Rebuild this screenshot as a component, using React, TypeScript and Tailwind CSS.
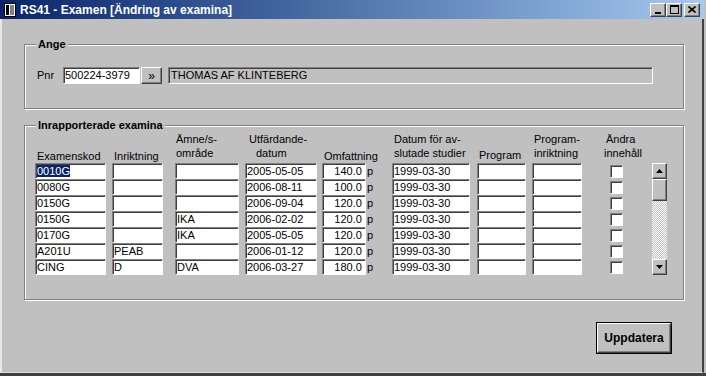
const sunken =
  "border border-t-[#808080] border-l-[#808080] border-b-white border-r-white shadow-[inset_1px_1px_0_#404040]";
const raised =
  "border border-t-white border-l-white border-b-[#404040] border-r-[#404040] shadow-[inset_-1px_-1px_0_#808080]";

type Row = { kod: string; inr: string; amne: string; utf: string; omf: string; avsl: string };

const ROWS: Row[] = [
  { kod: "0010G", inr: "", amne: "", utf: "2005-05-05", omf: "140.0", avsl: "1999-03-30" },
  { kod: "0080G", inr: "", amne: "", utf: "2006-08-11", omf: "100.0", avsl: "1999-03-30" },
  { kod: "0150G", inr: "", amne: "", utf: "2006-09-04", omf: "120.0", avsl: "1999-03-30" },
  { kod: "0150G", inr: "", amne: "IKA", utf: "2006-02-02", omf: "120.0", avsl: "1999-03-30" },
  { kod: "0170G", inr: "", amne: "IKA", utf: "2005-05-05", omf: "120.0", avsl: "1999-03-30" },
  { kod: "A201U", inr: "PEAB", amne: "", utf: "2006-01-12", omf: "120.0", avsl: "1999-03-30" },
  { kod: "CING", inr: "D", amne: "DVA", utf: "2006-03-27", omf: "180.0", avsl: "1999-03-30" },
];

function Cell({ className = "", children }: { className?: string; children?: React.ReactNode }) {
  return (
    <div className={`h-[16px] overflow-hidden bg-white pl-[1px] leading-[14px] whitespace-nowrap ${sunken} ${className}`}>
      {children}
    </div>
  );
}

function Column({
  className,
  head,
  children,
}: {
  className: string;
  head: React.ReactNode;
  children: React.ReactNode;
}) {
  return (
    <div className={`flex shrink-0 flex-col ${className}`}>
      <div className="flex h-[31px] flex-col justify-end leading-[14px] whitespace-nowrap">{head}</div>
      {children}
    </div>
  );
}

function GroupBox({
  label,
  className,
  children,
}: {
  label: string;
  className: string;
  children: React.ReactNode;
}) {
  return (
    <div
      className={`relative shrink-0 border border-[#808080] shadow-[inset_1px_1px_0_#fff,1px_1px_0_#fff] ${className}`}
    >
      <span className="absolute top-[-8px] left-[11px] bg-[#c0c0c0] px-[2px] leading-[14px] font-bold">
        {label}
      </span>
      {children}
    </div>
  );
}

function TitleIcon() {
  return (
    <svg width="12" height="14" viewBox="0 0 12 14" className="shrink-0">
      <rect x="0.5" y="0.5" width="11" height="13" fill="#fff" stroke="#000" />
      <rect x="2" y="2" width="3" height="10" fill="#000" />
      <path d="M6 3h4M6 5h4M6 7h4M6 9h4M6 11h4" stroke="#000" strokeWidth="1" />
    </svg>
  );
}

function CaptionButton({ children, className = "" }: { children: React.ReactNode; className?: string }) {
  return (
    <div
      className={`flex h-[14px] w-[16px] items-center justify-center bg-[#c0c0c0] ${raised} ${className}`}
    >
      {children}
    </div>
  );
}

function ScrollBtn({ up }: { up?: boolean }) {
  return (
    <div className={`flex h-[16px] w-[15px] items-center justify-center bg-[#c0c0c0] ${raised}`}>
      <svg width="7" height="4" viewBox="0 0 7 4">
        {up ? <path d="M3.5 0L7 4H0z" fill="#000" /> : <path d="M0 0h7L3.5 4z" fill="#000" />}
      </svg>
    </div>
  );
}

export default function App() {
  return (
    <div className="flex h-[376px] w-[706px] flex-col overflow-hidden border-b-[3px] border-b-[#404040] bg-[#c0c0c0] font-['Liberation_Sans',Arial,sans-serif] text-[11px] text-black">
      {/* title bar */}
      <div className="flex h-[19px] w-[704px] shrink-0 items-center bg-linear-to-r from-[#0a246a] to-[#a6caf0] pl-[4px]">
        <TitleIcon />
        <span className="ml-[4px] text-[12px] font-bold text-white">RS41 - Examen [Ändring av examina]</span>
        <div className="ml-auto flex items-center pr-[4px]">
          <CaptionButton>
            <span className="mt-[6px] block h-[2px] w-[6px] bg-black" />
          </CaptionButton>
          <CaptionButton>
            <span className="block h-[9px] w-[9px] border border-t-2 border-black" />
          </CaptionButton>
          <CaptionButton className="ml-[2px]">
            <svg width="8" height="7" viewBox="0 0 8 7">
              <path d="M0.5 0.5L7.5 6.5M7.5 0.5L0.5 6.5" stroke="#000" strokeWidth="1.6" />
            </svg>
          </CaptionButton>
        </div>
      </div>

      {/* body */}
      <div className="flex w-[704px] grow flex-col border-r-2 border-b border-l-2 border-r-[#404040] border-b-[#e0e0e0] border-l-[#e8e8e8]">
        <GroupBox label="Ange" className="mt-[25px] ml-[22px] h-[65px] w-[660px]">
          <div className="flex items-center pt-[22px] pl-[12px]">
            <span className="w-[26px]">Pnr</span>
            <div className={`h-[17px] w-[77px] bg-white pl-[1px] leading-[15px] ${sunken}`}>500224-3979</div>
            <div
              className={`ml-[1px] flex h-[17px] w-[21px] items-center justify-center bg-[#c0c0c0] text-[12px] leading-[12px] ${raised}`}
            >
              »
            </div>
            <div className={`ml-[6px] h-[17px] w-[485px] bg-[#c0c0c0] pl-[2px] leading-[15px] ${sunken}`}>
              THOMAS AF KLINTEBERG
            </div>
          </div>
        </GroupBox>

        <GroupBox label="Inrapporterade examina" className="mt-[16px] ml-[22px] h-[175px] w-[660px]">
          <div className="flex pt-[6px] pl-[10px]">
            <Column className="w-[71px]" head={<span className="pl-[2px]">Examenskod</span>}>
              {ROWS.map((r, i) => (
                <Cell key={i}>
                  {i === 0 ? <span className="bg-[#0a246a] text-white">{r.kod}</span> : r.kod}
                </Cell>
              ))}
            </Column>
            <Column className="ml-[6px] w-[51px]" head={<span className="pl-[2px]">Inriktning</span>}>
              {ROWS.map((r, i) => (
                <Cell key={i}>{r.inr}</Cell>
              ))}
            </Column>
            <Column
              className="ml-[12px] w-[64px]"
              head={
                <div className="pb-[3px] pl-[1px]">
                  <div>Ämne/s-</div>
                  <div>område</div>
                </div>
              }
            >
              {ROWS.map((r, i) => (
                <Cell key={i}>{r.amne}</Cell>
              ))}
            </Column>
            <Column
              className="ml-[6px] w-[72px]"
              head={
                <div className="pb-[3px]">
                  <div className="pl-[4px]">Utfärdande-</div>
                  <div className="pl-[11px]">datum</div>
                </div>
              }
            >
              {ROWS.map((r, i) => (
                <Cell key={i}>{r.utf}</Cell>
              ))}
            </Column>
            <Column className="ml-[5px] w-[51px]" head={<span className="pl-[2px]">Omfattning</span>}>
              {ROWS.map((r, i) => (
                <div key={i} className="flex items-center">
                  <Cell className="w-[44px] pr-[3px] text-right">{r.omf}</Cell>
                  <span className="ml-[1px] leading-[14px]">p</span>
                </div>
              ))}
            </Column>
            <Column
              className="ml-[19px] w-[78px]"
              head={
                <div className="pb-[3px] pl-[2px]">
                  <div>Datum för av-</div>
                  <div>slutade studier</div>
                </div>
              }
            >
              {ROWS.map((r, i) => (
                <Cell key={i}>{r.avsl}</Cell>
              ))}
            </Column>
            <Column className="ml-[7px] w-[49px]" head={<span className="pb-[1px] pl-[2px]">Program</span>}>
              {ROWS.map((_, i) => (
                <Cell key={i} />
              ))}
            </Column>
            <Column
              className="ml-[6px] w-[50px]"
              head={
                <div className="pb-[3px] pl-[2px]">
                  <div>Program-</div>
                  <div>inriktning</div>
                </div>
              }
            >
              {ROWS.map((_, i) => (
                <Cell key={i} />
              ))}
            </Column>
            <Column
              className="ml-[22px] w-[40px]"
              head={
                <div className="pb-[3px]">
                  <div className="pl-[2px]">Ändra</div>
                  <div>innehåll</div>
                </div>
              }
            >
              {ROWS.map((_, i) => (
                <div key={i} className="flex h-[16px] items-center pl-[6px]">
                  <span className={`block h-[13px] w-[13px] bg-white ${sunken}`} />
                </div>
              ))}
            </Column>
            <div className="ml-[8px] flex w-[15px] shrink-0 flex-col pt-[31px]">
              <ScrollBtn up />
              <div className={`h-[22px] w-[15px] bg-[#c0c0c0] ${raised}`} />
              <div className="h-[58px] w-[15px] bg-[repeating-conic-gradient(#ffffff_0_25%,#c0c0c0_0_50%)] bg-[length:2px_2px]" />
              <ScrollBtn />
            </div>
          </div>
        </GroupBox>

        <div className="mt-[22px] ml-[594px] w-[76px] shrink-0 border border-black">
          <div className={`flex h-[30px] items-center justify-center bg-[#c0c0c0] text-[12px] font-bold ${raised}`}>
            Uppdatera
          </div>
        </div>
      </div>
    </div>
  );
}
